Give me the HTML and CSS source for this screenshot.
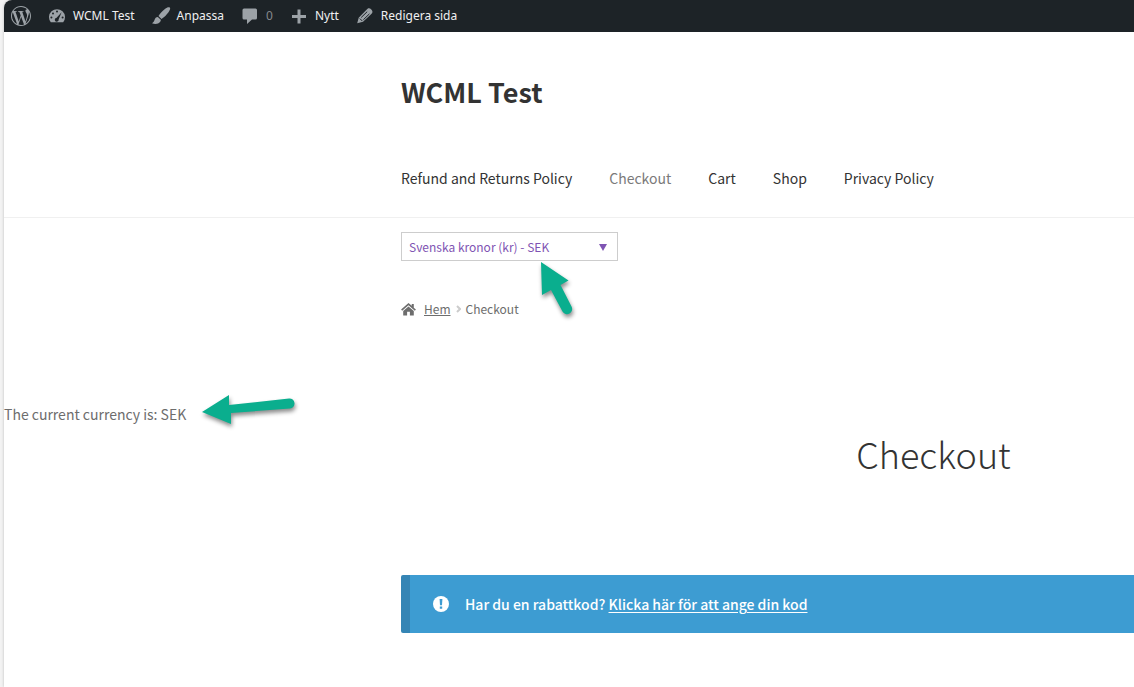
FILE: index.html
```html
<!DOCTYPE html>
<html lang="sv">
<head>
<meta charset="utf-8">
<meta name="viewport" content="width=device-width, initial-scale=1">
<title>Checkout – WCML Test</title>
<link rel="stylesheet" href="styles.css">
</head>
<body>
<div class="page">
  <nav class="adminbar" aria-label="Toolbar">
    <a class="ab-item ab-logo" href="#" aria-label="WordPress"><svg viewBox="0 0 24 24"><path d="M21.469 6.825c.84 1.537 1.318 3.3 1.318 5.175 0 3.979-2.156 7.456-5.363 9.325l3.295-9.527c.615-1.54.82-2.771.82-3.864 0-.405-.026-.78-.07-1.11m-7.981.105c.647-.03 1.232-.105 1.232-.105.582-.075.514-.93-.067-.899 0 0-1.755.135-2.88.135-1.064 0-2.85-.15-2.85-.15-.585-.03-.661.855-.075.885 0 0 .54.061 1.125.09l1.68 4.605-2.37 7.08L5.354 6.9c.649-.03 1.234-.1 1.234-.1.585-.075.516-.93-.065-.896 0 0-1.746.138-2.874.138-.2 0-.438-.008-.69-.015C4.911 3.15 8.235 1.215 12 1.215c2.809 0 5.365 1.072 7.286 2.833-.046-.003-.091-.009-.141-.009-1.06 0-1.812.923-1.812 1.914 0 .89.513 1.643 1.06 2.531.411.72.89 1.643.89 2.977 0 .915-.354 1.994-.821 3.479l-1.075 3.585-3.9-11.61zM12 22.784c-1.059 0-2.081-.153-3.048-.437l3.237-9.406 3.315 9.087c.024.053.05.101.078.149-1.12.393-2.325.609-3.582.609M1.211 12c0-1.564.336-3.05.935-4.39L7.29 21.709C3.694 19.96 1.212 16.271 1.211 12M12 0C5.385 0 0 5.385 0 12s5.385 12 12 12 12-5.385 12-12S18.615 0 12 0"/></svg></a>
    <a class="ab-item" href="#"><svg viewBox="0 0 20 20"><path d="M3.800 16.200h12.400a8 8 0 1 0-12.400 0z"/><g class="cut"><circle cx="10" cy="5.600" r="1"/><circle cx="6" cy="7.400" r="1"/><circle cx="4.400" cy="11.400" r="1"/><circle cx="15.600" cy="11.400" r="1"/><path d="M14.600 6.200l-2.900 7.100a2 2 0 1 1-2.100-1.600z"/></g></svg>WCML Test</a>
    <a class="ab-item" href="#"><svg viewBox="0 0 20 20"><path d="M18.800 1.600c-1-.8-2.700-.4-4.900 1.400-2.800 2.200-5 4.700-6.400 7l3 2.900c2.700-1.700 5.200-4.200 7-6.700 1.600-2.200 2.100-3.800 1.300-4.600zM6.800 11c-1.800.1-2.700 1.100-3.200 2.800-.4 1.500-1.200 2.800-2.600 3.400 2.700 1.400 6.500 1 8-1.100.6-.8.900-1.600.8-2.400z"/></svg>Anpassa</a>
    <a class="ab-item ab-muted" href="#"><svg viewBox="0 0 20 20"><path d="M4 2.500h11.500a1.500 1.500 0 0 1 1.500 1.500V12a1.500 1.500 0 0 1-1.500 1.500H12L7 18v-4.500H4A1.500 1.500 0 0 1 2.500 12V4A1.500 1.500 0 0 1 4 2.500z"/></svg>0</a>
    <a class="ab-item" href="#"><svg viewBox="0 0 20 20"><path d="M8.500 3.500h3v5.500H17v3h-5.500v5.500h-3V12H3V9h5.500z"/></svg>Nytt</a>
    <a class="ab-item" href="#"><svg viewBox="0 0 20 20"><path d="M11.300 4l1.300-1.200c1-.9 2.500-.5 3.700.7 1.200 1.200 1.600 2.700.7 3.700L15.800 8.500 8 15.800 2.200 17.300 3.700 11.800z"/><path class="cut-line" d="M12.200 5.700l-6 5.800M14.400 7.900l-6 5.800M4.800 12.500l2.500 2.500"/></svg>Redigera sida</a>
  </nav>

  <header class="site-header">
    <a class="site-title" href="#">WCML Test</a>
    <nav class="main-nav" aria-label="Primary">
      <a href="#">Refund and Returns Policy</a>
      <a class="current" href="#" aria-current="page">Checkout</a>
      <a href="#">Cart</a>
      <a href="#">Shop</a>
      <a href="#">Privacy Policy</a>
    </nav>
  </header>

  <div class="column">
    <div class="currency">
      <select class="currency-select" aria-label="Currency"><option>Svenska kronor (kr) - SEK</option></select>
      <svg class="caret" viewBox="0 0 8 7"><path d="M0 0h8L4 7z"/></svg>
      <svg class="pointer pointer-up" viewBox="0 0 40 64"><path d="M4 4L31.500 22.500 23.500 27 34.500 48.500A5 5 0 0 1 25.500 53.500L14 32 5 37z"/></svg>
    </div>
    <nav class="breadcrumb" aria-label="Breadcrumb">
      <svg class="home" viewBox="0 0 16 14"><path d="M8 0L0 7l1.200 1.300L8 2.500l6.800 5.800L16 7l-2.300-2V1h-2.200v2z"/><path d="M8 3.800L2.300 8.600V13.500H6.500V9.500h3v4h4.200V8.600z"/></svg>
      <a href="#">Hem</a>
      <svg class="chevron" viewBox="0 0 5 8"><path d="M1 1l3 3-3 3"/></svg>
      <span>Checkout</span>
    </nav>
  </div>

  <p class="current-currency"><span>The current currency is: SEK</span>
    <svg class="pointer pointer-left" viewBox="0 0 104 48"><path d="M4 23L31 6V16L91 9.500A5 5 0 0 1 92 19.500L33 24V35z"/></svg>
  </p>

  <main class="column">
    <h1 class="entry-title">Checkout</h1>
    <div class="notice">
      <svg class="info" viewBox="0 0 16 16"><circle cx="8" cy="8" r="8"/><path class="mark" d="M6.600 3h2.800L9 9.200H7zM6.800 10.500h2.400v2.300H6.800z"/></svg>
      <span>Har du en rabattkod? <a href="#">Klicka här för att ange din kod</a></span>
    </div>
  </main>
</div>
</body>
</html>
```
FILE: styles.css
```css
* { box-sizing: border-box; }

body {
  margin: 0;
  padding-left: 4px;
  background: #f3f3f3;
  color: #6d6d6d;
  font: 14px/24px "Noto Sans CJK SC", sans-serif;
}

a { color: inherit; }
svg { flex: none; }

.page {
  min-height: 100vh;
  background: #fff;
  border-top-left-radius: 8px;
  box-shadow: 0 0 3px #bbb;
}

.adminbar {
  display: flex;
  align-items: center;
  gap: 16px;
  height: 32px;
  padding-left: 7px;
  background: #1d2327;
  border-top-left-radius: 8px;
  color: #f0f0f1;
  font: 12px/32px "Noto Sans", sans-serif;
}

.ab-item {
  display: flex;
  align-items: center;
  gap: 6px;
  text-decoration: none;
  white-space: nowrap;
}

.ab-item svg { width: 20px; height: 20px; fill: #9ca2a7; }
.ab-muted { color: #85898d; }
.ab-item .cut { fill: #1d2327; }
.ab-item .cut-line { fill: none; stroke: #1d2327; stroke-width: 1; }

.site-header {
  display: flex;
  flex-direction: column;
  align-items: flex-start;
  gap: 54px;
  padding: 40px 0 27px 397px;
  border-bottom: 1px solid #f0f0f0;
}

.site-title {
  color: #333;
  font-size: 27px;
  font-weight: 700;
  line-height: 40px;
  text-decoration: none;
}

.main-nav {
  display: flex;
  gap: 37px;
  color: #333;
  white-space: nowrap;
}

.main-nav a { text-decoration: none; }
.main-nav .current { color: #7a7a7a; }

.column { padding-left: 397px; }

.currency {
  position: relative;
  width: 217px;
  margin-top: 14px;
}

.currency-select {
  appearance: none;
  display: block;
  width: 100%;
  height: 29px;
  padding: 0 7px;
  border: 1px solid #cdcdcd;
  border-radius: 0;
  background: #fff;
  color: #7f54b3;
  font: 12px/27px "Noto Sans CJK SC", sans-serif;
}

.caret {
  position: absolute;
  top: 12px;
  right: 11px;
  width: 8px;
  height: 7px;
  fill: #7f54b3;
}

.pointer {
  position: absolute;
  fill: #0aae8e;
  filter: drop-shadow(1px 3px 2px rgb(0 0 0 / 45%));
}

.pointer-up { top: 26px; left: 136px; width: 40px; height: 64px; }
.pointer-left { top: -13px; left: 194px; width: 104px; height: 48px; }

.breadcrumb {
  display: flex;
  align-items: center;
  margin-top: 36px;
  font-size: 12px;
}

.home { width: 15px; height: 13px; margin-right: 8px; fill: #6d6d6d; }
.chevron { width: 5px; height: 8px; margin: 0 5px; fill: none; stroke: #ccc; stroke-width: 2; }

.current-currency {
  position: relative;
  margin: 81px 0 0;
}

.entry-title {
  margin: 0;
  padding: 0 0 95px 332px;
  color: #333;
  font-size: 36px;
  font-weight: 300;
  line-height: 54px;
  text-align: center;
}

.notice {
  display: flex;
  align-items: center;
  gap: 16px;
  padding: 17px 23px;
  border-left: 9px solid #3585b5;
  border-radius: 2px 0 0 2px;
  background: #3d9cd2;
  color: #fff;
  font-weight: 500;
}

.notice a { text-underline-offset: 2px; }
.info { width: 16px; height: 16px; fill: #fff; }
.info .mark { fill: #3d9cd2; }
```
